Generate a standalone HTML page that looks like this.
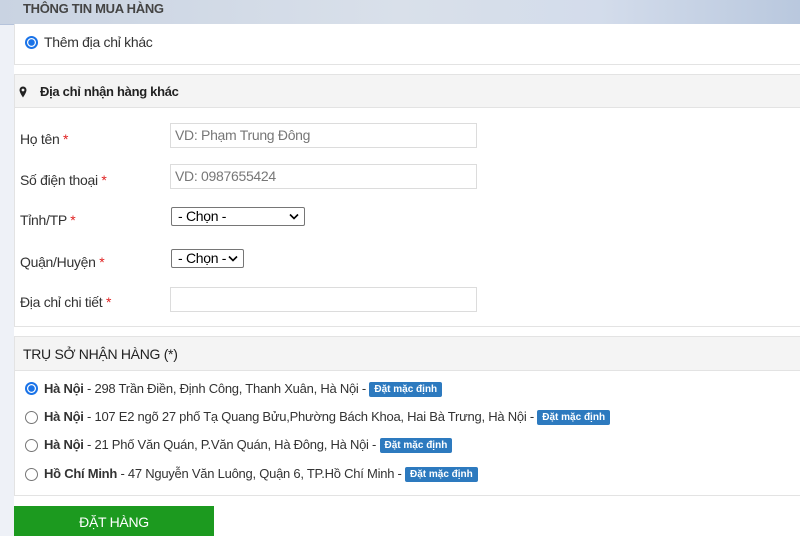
<!DOCTYPE html><html><head><meta charset="utf-8"><style>
*{box-sizing:border-box;margin:0;padding:0}
body{width:800px;height:536px;overflow:hidden;background:#fff;font-family:"Liberation Sans",Arial,sans-serif;font-size:14px;letter-spacing:-0.3px;color:#333;position:relative}
.a{position:absolute}
.strip{left:0;top:0;width:14px;height:536px;background:#eef1f7}
.hdr{left:0;top:0;width:800px;height:25px;background:linear-gradient(90deg,#c9d3e2,#d9e0ea 50%,#d3dceb 75%,#b9c8de);border-bottom:1px solid #b5c3db}
.panel{left:14px;width:786px;border:1px solid #e3e3e3;border-right:none;background:#fff}
.ph{background:#f4f4f4;border-bottom:1px solid #e3e3e3}
.radio{width:13px;height:13px;border-radius:50%;border:1px solid #767676;background:#fff}
.radio.on{border:2px solid #1a73e8;background:radial-gradient(circle,#1a73e8 0 3px,#fff 3.5px)}
.inp{border:1px solid #dcdcdc;height:25px;width:307px;left:170px;color:#777;font-size:14px;padding:3px 4px}
.sel{border:1px solid #767676;border-radius:2px;height:19px;left:171px;font-size:14px;color:#000;padding:0 6px;line-height:17px}
.chev{position:absolute;right:5px;top:5px}
.req{color:#e02020}
.row{font-size:13px;letter-spacing:-0.25px;color:#333}
.badge{display:inline-block;background:#2d7abf;color:#fff;font-size:10px;letter-spacing:0;font-weight:bold;padding:2px 5px;border-radius:2px;vertical-align:1px}
</style></head><body>
<div class="a strip"></div>
<div class="a hdr"></div>
<div class="a" style="left:23px;top:1px;font-size:13px;font-weight:bold;color:#444">THÔNG TIN MUA HÀNG</div>
<div class="a panel" style="top:24px;height:41px;border-top:none"></div>
<div class="a radio on" style="left:25px;top:36px"></div>
<div class="a" style="left:44px;top:34px">Thêm địa chỉ khác</div>
<div class="a panel" style="top:74px;height:253px"></div>
<div class="a ph" style="left:15px;top:75px;width:785px;height:33px"></div>
<svg class="a" style="left:19px;top:86px" width="8" height="12" viewBox="0 0 8 12"><path d="M4 0.5A3.5 3.5 0 0 0 .5 4C.5 6.5 4 11.5 4 11.5S7.5 6.5 7.5 4A3.5 3.5 0 0 0 4 .5Z" fill="#222"/><circle cx="4" cy="4" r="1.4" fill="#f4f4f4"/></svg>
<div class="a" style="left:40px;top:84px;font-size:13px;font-weight:bold;color:#222">Địa chỉ nhận hàng khác</div>
<div class="a" style="left:20px;top:131px">Họ tên <span class="req">*</span></div>
<div class="a inp" style="top:123px">VD: Phạm Trung Đông</div>
<div class="a" style="left:20px;top:172px">Số điện thoại <span class="req">*</span></div>
<div class="a inp" style="top:164px">VD: 0987655424</div>
<div class="a" style="left:20px;top:212px">Tỉnh/TP <span class="req">*</span></div>
<div class="a sel" style="top:207px;width:134px">- Chọn -<svg class="chev" width="10" height="7" viewBox="0 0 10 7"><path d="M1 1.5L5 5.5L9 1.5" fill="none" stroke="#000" stroke-width="1.6"/></svg></div>
<div class="a" style="left:20px;top:254px">Quận/Huyện <span class="req">*</span></div>
<div class="a sel" style="top:249px;width:73px">- Chọn -<svg class="chev" width="10" height="7" viewBox="0 0 10 7"><path d="M1 1.5L5 5.5L9 1.5" fill="none" stroke="#000" stroke-width="1.6"/></svg></div>
<div class="a" style="left:20px;top:294px">Địa chỉ chi tiết <span class="req">*</span></div>
<div class="a inp" style="top:287px"></div>
<div class="a panel" style="top:336px;height:160px"></div>
<div class="a ph" style="left:15px;top:337px;width:785px;height:34px"></div>
<div class="a" style="left:23px;top:346px;font-size:14px;color:#222">TRỤ SỞ NHẬN HÀNG (*)</div>
<div class="a radio on" style="left:25px;top:382px"></div>
<div class="a row" style="left:44px;top:381px"><b>Hà Nội</b> - 298 Trần Điền, Định Công, Thanh Xuân, Hà Nội - <span class="badge">Đặt mặc định</span></div>
<div class="a radio" style="left:25px;top:411px"></div>
<div class="a row" style="left:44px;top:409px"><b>Hà Nội</b> - 107 E2 ngõ 27 phố Tạ Quang Bửu,Phường Bách Khoa, Hai Bà Trưng, Hà Nội - <span class="badge">Đặt mặc định</span></div>
<div class="a radio" style="left:25px;top:439px"></div>
<div class="a row" style="left:44px;top:437px"><b>Hà Nội</b> - 21 Phố Văn Quán, P.Văn Quán, Hà Đông, Hà Nội - <span class="badge">Đặt mặc định</span></div>
<div class="a radio" style="left:25px;top:468px"></div>
<div class="a row" style="left:44px;top:466px"><b>Hồ Chí Minh</b> - 47 Nguyễn Văn Luông, Quận 6, TP.Hồ Chí Minh - <span class="badge">Đặt mặc định</span></div>
<div class="a" style="left:14px;top:506px;width:200px;height:30px;background:#1c9a1f;color:#fff;text-align:center;line-height:32px;font-size:14px">ĐẶT HÀNG</div>
</body></html>
